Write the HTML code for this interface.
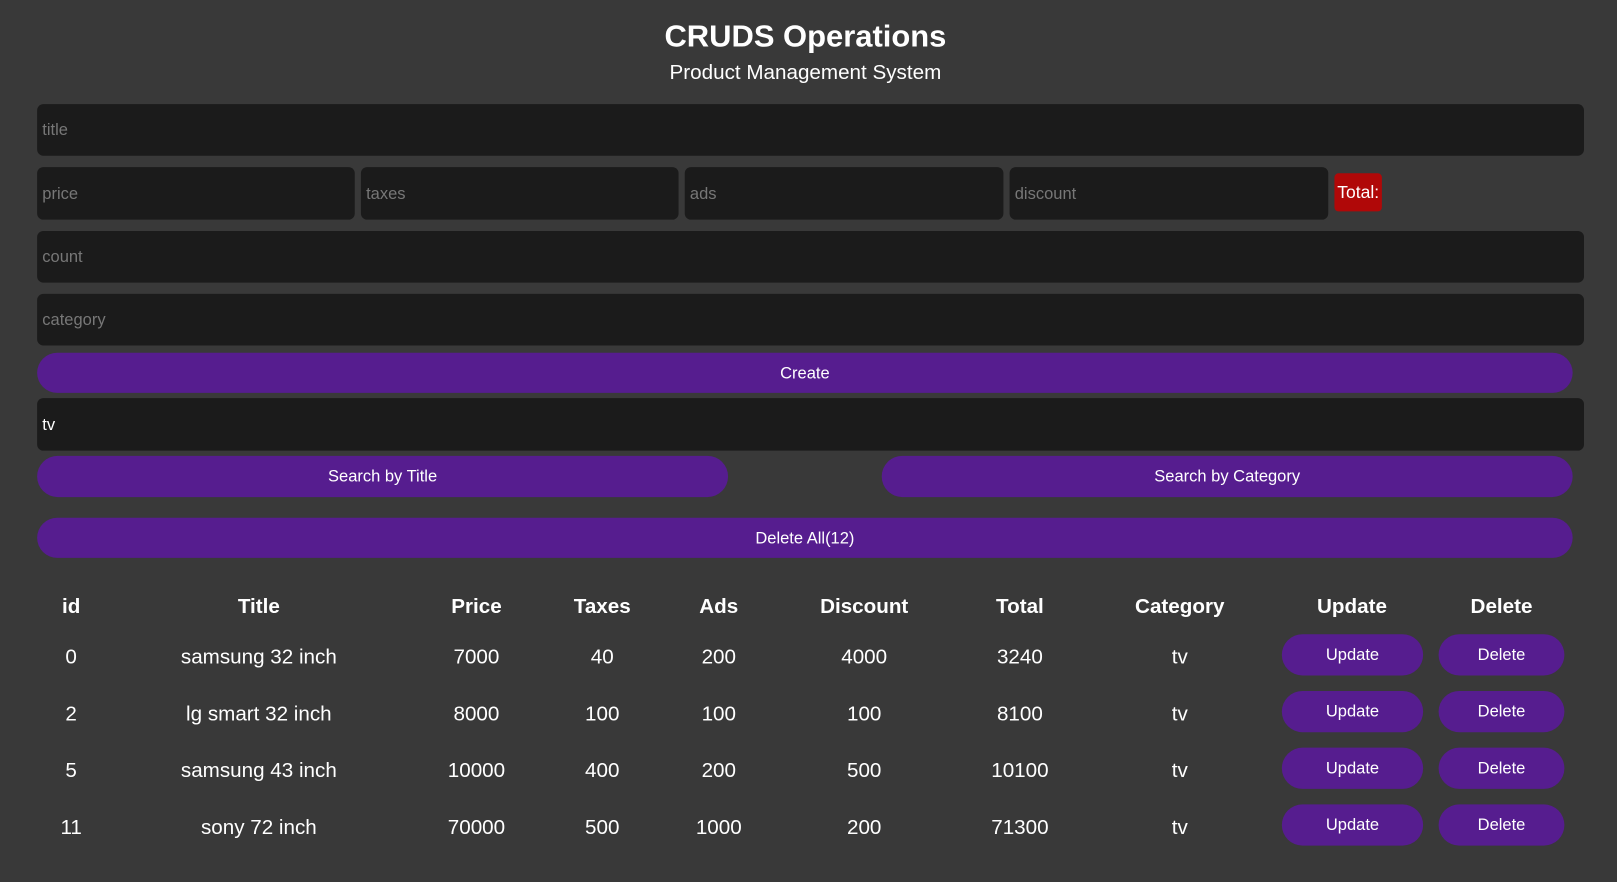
<!DOCTYPE html>
<html><head><meta charset="utf-8"><style>
html,body{margin:0;padding:0;background:#393939;width:1617px;height:882px;overflow:hidden}
#w{position:relative;width:1568px;height:855px;transform:scale(1.03125);transform-origin:0 0;font-family:"Liberation Sans",sans-serif;color:#fff}
.a{position:absolute}
.in{position:absolute;background:#1b1b1b;border-radius:6px;color:#777;font-size:16px;box-sizing:border-box;padding-left:5px;padding-top:2px;display:flex;align-items:center}
.btn{position:absolute;background:#561d8f;border-radius:20px;color:#fff;font-size:16px;display:flex;align-items:center;justify-content:center;padding-top:2px;box-sizing:border-box}
.c{position:absolute;transform:translate(-50%,-50%);white-space:nowrap;font-size:20px;margin-top:2px}
.h{font-weight:bold;font-size:20px}
</style></head><body><div id="w">
<div class="c" style="left:781px;top:34px;font-size:30px;font-weight:bold">CRUDS Operations</div>
<div class="c" style="left:781px;top:69px;font-size:20px">Product Management System</div>
<div class="in" style="left:36px;top:101px;width:1500px;height:50px">title</div>
<div class="in" style="left:36px;top:162px;width:308px;height:51px">price</div>
<div class="in" style="left:350px;top:162px;width:308px;height:51px">taxes</div>
<div class="in" style="left:664px;top:162px;width:309px;height:51px">ads</div>
<div class="in" style="left:979px;top:162px;width:309px;height:51px">discount</div>
<div class="a" style="left:1294px;top:168px;width:46px;height:37px;background:#b00808;border-radius:4px;font-size:17px;display:flex;align-items:center;justify-content:center">Total:</div>
<div class="in" style="left:36px;top:224px;width:1500px;height:50px">count</div>
<div class="in" style="left:36px;top:285px;width:1500px;height:50px">category</div>
<div class="btn" style="left:36px;top:342px;width:1489px;height:39px">Create</div>
<div class="in" style="left:36px;top:386px;width:1500px;height:51px;color:#fff">tv</div>
<div class="btn" style="left:36px;top:442px;width:670px;height:40px">Search by Title</div>
<div class="btn" style="left:855px;top:442px;width:670px;height:40px">Search by Category</div>
<div class="btn" style="left:36px;top:502px;width:1489px;height:39px">Delete All(12)</div>
<div class="c h" style="left:69px;top:587px">id</div>
<div class="c h" style="left:251px;top:587px">Title</div>
<div class="c h" style="left:462px;top:587px">Price</div>
<div class="c h" style="left:584px;top:587px">Taxes</div>
<div class="c h" style="left:697px;top:587px">Ads</div>
<div class="c h" style="left:838px;top:587px">Discount</div>
<div class="c h" style="left:989px;top:587px">Total</div>
<div class="c h" style="left:1144px;top:587px">Category</div>
<div class="c h" style="left:1311px;top:587px">Update</div>
<div class="c h" style="left:1456px;top:587px">Delete</div>
<div class="c" style="left:69px;top:636px">0</div><div class="c" style="left:251px;top:636px">samsung 32 inch</div><div class="c" style="left:462px;top:636px">7000</div><div class="c" style="left:584px;top:636px">40</div><div class="c" style="left:697px;top:636px">200</div><div class="c" style="left:838px;top:636px">4000</div><div class="c" style="left:989px;top:636px">3240</div><div class="c" style="left:1144px;top:636px">tv</div>
<div class="btn" style="left:1243px;top:615px;width:137px;height:40px">Update</div><div class="btn" style="left:1395px;top:615px;width:122px;height:40px">Delete</div>
<div class="c" style="left:69px;top:691px">2</div><div class="c" style="left:251px;top:691px">lg smart 32 inch</div><div class="c" style="left:462px;top:691px">8000</div><div class="c" style="left:584px;top:691px">100</div><div class="c" style="left:697px;top:691px">100</div><div class="c" style="left:838px;top:691px">100</div><div class="c" style="left:989px;top:691px">8100</div><div class="c" style="left:1144px;top:691px">tv</div>
<div class="btn" style="left:1243px;top:670px;width:137px;height:40px">Update</div><div class="btn" style="left:1395px;top:670px;width:122px;height:40px">Delete</div>
<div class="c" style="left:69px;top:746px">5</div><div class="c" style="left:251px;top:746px">samsung 43 inch</div><div class="c" style="left:462px;top:746px">10000</div><div class="c" style="left:584px;top:746px">400</div><div class="c" style="left:697px;top:746px">200</div><div class="c" style="left:838px;top:746px">500</div><div class="c" style="left:989px;top:746px">10100</div><div class="c" style="left:1144px;top:746px">tv</div>
<div class="btn" style="left:1243px;top:725px;width:137px;height:40px">Update</div><div class="btn" style="left:1395px;top:725px;width:122px;height:40px">Delete</div>
<div class="c" style="left:69px;top:801px">11</div><div class="c" style="left:251px;top:801px">sony 72 inch</div><div class="c" style="left:462px;top:801px">70000</div><div class="c" style="left:584px;top:801px">500</div><div class="c" style="left:697px;top:801px">1000</div><div class="c" style="left:838px;top:801px">200</div><div class="c" style="left:989px;top:801px">71300</div><div class="c" style="left:1144px;top:801px">tv</div>
<div class="btn" style="left:1243px;top:780px;width:137px;height:40px">Update</div><div class="btn" style="left:1395px;top:780px;width:122px;height:40px">Delete</div>
</div></body></html>
